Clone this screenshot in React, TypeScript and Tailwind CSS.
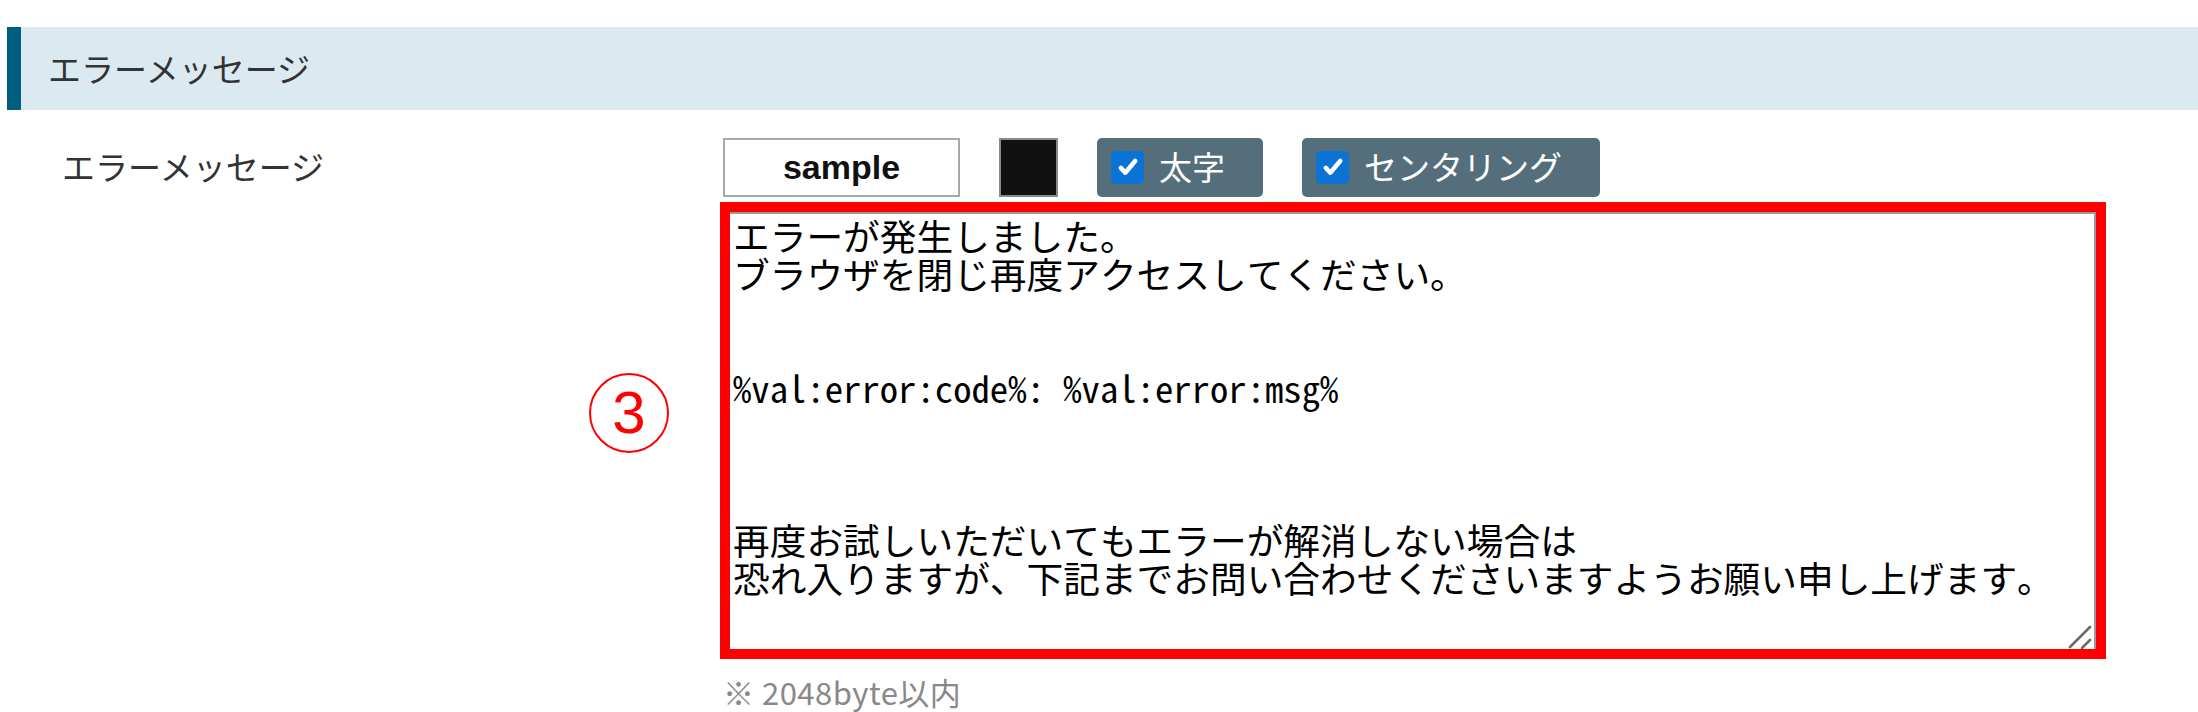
import React from "react";

const MESSAGE =
  "エラーが発生しました。\nブラウザを閉じ再度アクセスしてください。\n\n\n%val:error:code%: %val:error:msg%\n\n\n\n再度お試しいただいてもエラーが解消しない場合は\n恐れ入りますが、下記までお問い合わせくださいますようお願い申し上げます。";

function CheckButton({ label }: { label: string }) {
  return (
    <label className="flex h-[59px] items-center gap-[15px] rounded-[5px] bg-[#546f7b] pl-[14px] pr-[38px] text-[33px] text-white">
      <span className="flex h-[33px] w-[33px] items-center justify-center rounded-[5px] bg-[#0b72d6]">
        <svg viewBox="0 0 16 16" className="h-[24px] w-[24px]">
          <path d="M3.2 8.6l3 3.2L12.8 4" fill="none" stroke="white" strokeWidth="3" strokeLinecap="round" strokeLinejoin="round" />
        </svg>
      </span>
      <span>{label}</span>
    </label>
  );
}

export default function App() {
  return (
    <div className="min-h-[712px] w-full bg-white pt-[27px] font-['Noto_Sans_CJK_JP',sans-serif] text-[#333]">
      <div className="ml-[7px] flex h-[83px] items-center border-l-[14px] border-[#005f7f] bg-[#dbeaf1] pl-[27px] text-[33px]">
        エラーメッセージ
      </div>

      <div className="mt-[27px] flex pl-[62px]">
        <div className="flex h-[60px] w-[527px] items-center text-[33px]">エラーメッセージ</div>

        <div className="w-[131px] pt-[236px]">
          <div className="flex h-[80px] w-[80px] items-center justify-center rounded-full border-2 border-[#ff0000] font-['Liberation_Sans',sans-serif] text-[60px] leading-none text-[#ff0000]">
            3
          </div>
        </div>

        <div className="flex w-[1386px] flex-col">
          <div className="flex h-[60px] items-center gap-[39px] pl-[3px]">
            <div className="flex h-[59px] w-[237px] items-center justify-center border-2 border-[#a8a8a8] bg-white font-['Liberation_Sans',sans-serif] text-[34px] font-bold text-[#111]">
              sample
            </div>
            <div className="h-[59px] w-[59px] border-2 border-[#8a8a8a] bg-[#111]" />
            <CheckButton label="太字" />
            <CheckButton label="センタリング" />
          </div>

          <div className="relative mt-[5px] h-[457px] border-[10px] border-[#ff0000]">
            <textarea
              defaultValue={MESSAGE}
              className="block h-full w-full resize-none border-t-2 border-r-2 border-[#9a9a9a] bg-white pl-[3px] pt-[2px] font-['Noto_Sans_Mono_CJK_JP','Noto_Sans_CJK_JP',monospace] text-[36.7px] leading-[38px] text-black outline-none"
            />
            <svg viewBox="0 0 24 24" className="pointer-events-none absolute bottom-0 right-[4px] h-[24px] w-[24px]">
              <path d="M2 22L22 2M14 23L22 15" stroke="#6b6b6b" strokeWidth="2.6" strokeLinecap="round" />
            </svg>
          </div>

          <div className="mt-[10px] pl-[3px] text-[31px] tracking-[0.5px] text-[#888]">※ 2048byte以内</div>
        </div>
      </div>
    </div>
  );
}
